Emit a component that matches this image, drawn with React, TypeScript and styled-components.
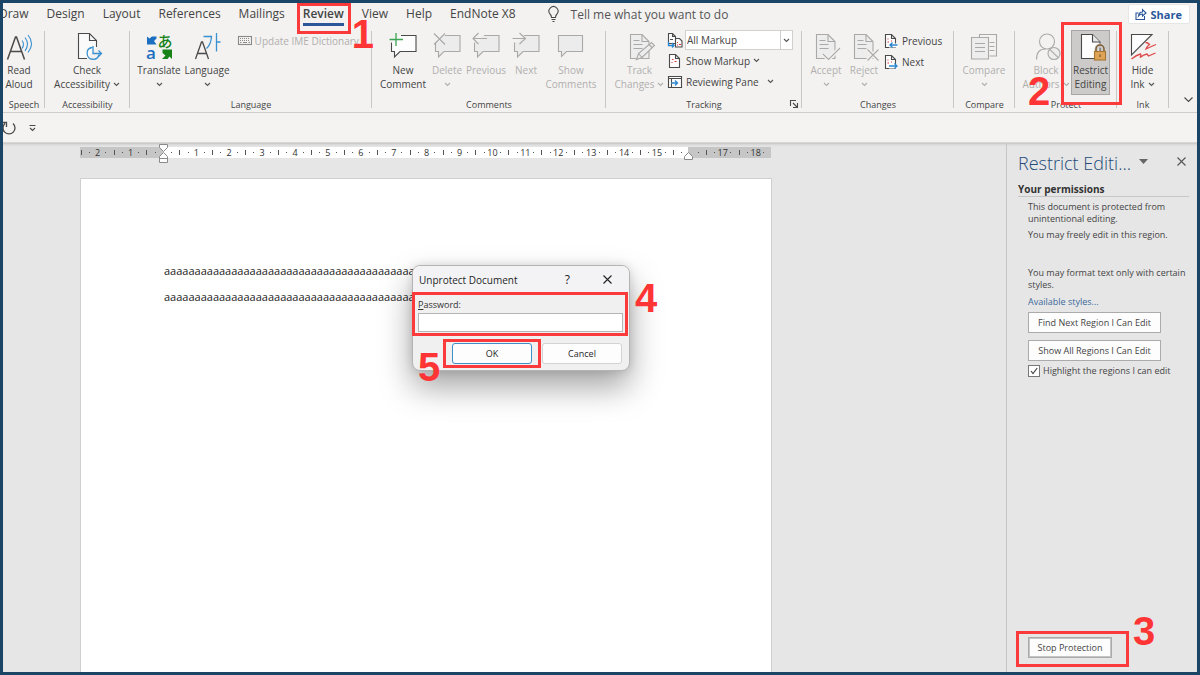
import React from "react";
import styled, { createGlobalStyle, css } from "styled-components";

const GlobalStyle = createGlobalStyle`
  *, *::before, *::after { box-sizing: border-box; }
  body { margin: 0; }
  body, button, input, select {
    font-family: "Open Sans", "Noto Sans", sans-serif;
    color: #444;
  }
  button { border: 0; background: none; padding: 0; }
  p, h2, h3 { margin: 0; font-weight: 400; }
  svg { display: block; flex: none; overflow: visible; }
`;

const Frame = styled.div`
  min-height: 100vh;
  display: flex;
  flex-direction: column;
  border: 3px solid #1b4566;
  background: #f3f2f1;
  overflow: hidden;
`;

/* ---------- annotations ---------- */

const Mark = styled.span<{ $inset: string }>`
  position: absolute;
  inset: ${(p) => p.$inset};
  border: 3px solid #fb3a3c;
  pointer-events: none;
  z-index: 3;
`;

const Step = styled.span<{ $x: number; $y: number }>`
  position: absolute;
  left: ${(p) => p.$x}px;
  top: ${(p) => p.$y}px;
  font: bold 40px/40px "Liberation Sans", sans-serif;
  color: #ff3535;
  pointer-events: none;
  z-index: 4;
`;

/* ---------- tab strip ---------- */

const TabBar = styled.nav`
  display: flex;
  align-items: flex-start;
  height: 25px;
  padding-right: 7px;
`;

const TabList = styled.div`
  display: flex;
  gap: 18px;
  margin-left: -4px;
  flex: 1;
  align-items: center;
`;

const Tab = styled.button<{ $active?: boolean }>`
  position: relative;
  flex: none;
  font-size: 12px;
  line-height: 22px;
  white-space: nowrap;
  ${(p) =>
    p.$active &&
    css`
      font-weight: 600;
      &::after {
        content: "";
        position: absolute;
        left: 0;
        right: 0;
        bottom: -1px;
        height: 3px;
        background: #2b579a;
      }
    `}
`;

const TellMe = styled.button`
  display: flex;
  align-items: center;
  gap: 12px;
  margin-left: 14px;
  font-size: 12px;
  color: #555;
  white-space: nowrap;
`;

const ShareButton = styled.button`
  display: flex;
  align-items: center;
  gap: 4px;
  height: 20px;
  margin-top: 1px;
  padding: 0 7px 0 6px;
  border-radius: 2px;
  background: #fff;
  border: 1px solid #e6e6e6;
  font-size: 11px;
  font-weight: 700;
  color: #2b579a;
`;

/* ---------- ribbon ---------- */

const Ribbon = styled.div`
  display: flex;
  height: 85px;
  padding-bottom: 1px;
  border-bottom: 1px solid #cfcdcb;
`;

const Group = styled.section<{ $w: number }>`
  position: relative;
  flex: 0 0 ${(p) => p.$w}px;
  display: flex;
  flex-direction: column;
  margin-top: 2px;
  &::after {
    content: "";
    position: absolute;
    right: 0;
    top: 1px;
    bottom: 3px;
    width: 1px;
    background: #c9c7c5;
  }
`;

const GroupBody = styled.div<{ $pad?: number }>`
  display: flex;
  align-items: flex-start;
  flex: 1;
  padding-left: ${(p) => p.$pad ?? 0}px;
`;

const GroupLabel = styled.h3`
  font-size: 9px;
  line-height: 12px;
  text-align: center;
  white-space: nowrap;
`;

const BigButton = styled.button<{ $w: number; $pressed?: boolean }>`
  position: relative;
  flex: none;
  width: ${(p) => p.$w}px;
  height: 65px;
  padding-top: 1px;
  display: flex;
  flex-direction: column;
  align-items: center;
  font-size: 10px;
  line-height: 14px;
  white-space: nowrap;
  &:disabled { color: #b1afad; }
  ${(p) =>
    p.$pressed &&
    css`
      background: #cdcbc9;
      box-shadow: inset 0 0 0 1px #a9a7a5;
    `}
`;

const LabelLine = styled.span`
  display: flex;
  align-items: center;
  justify-content: center;
  gap: 3px;
  min-height: 14px;
`;

const SmallStack = styled.div`
  display: flex;
  flex-direction: column;
  align-items: flex-start;
`;

const SmallButton = styled.button`
  display: flex;
  align-items: center;
  gap: 3px;
  height: 21px;
  font-size: 10px;
  white-space: nowrap;
  &:disabled { color: #b1afad; }
`;

const MarkupField = styled.div`
  display: flex;
  align-items: center;
  gap: 2px;
  height: 20px;
`;

const MarkupBox = styled.div`
  position: relative;
  width: 108px;
  height: 20px;
  svg {
    position: absolute;
    right: 3px;
    top: 8px;
  }
`;

const MarkupSelect = styled.select`
  appearance: none;
  display: block;
  width: 100%;
  height: 100%;
  padding: 0 12px 0 1px;
  border: 1px solid #d2d0ce;
  border-radius: 0;
  font-size: 10px;
  background: linear-gradient(#d2d0ce, #d2d0ce) right 11px top / 1px 100% no-repeat #fff;
`;

const Launcher = styled.button`
  position: absolute;
  right: 4px;
  bottom: 3px;
`;

const Collapse = styled.button`
  align-self: flex-end;
  margin-left: auto;
  padding: 0 4px 8px;
`;

const QuickAccess = styled.div`
  display: flex;
  align-items: center;
  gap: 12px;
  height: 30px;
  border-bottom: 1px solid #d8d6d4;
  background: #f4f3f2;
`;

/* ---------- document ---------- */

const Workspace = styled.main`
  flex: 1;
  display: flex;
  background: #e6e6e6;
  box-shadow: inset 0 3px 3px -2px #bdbdbd;
`;

const Canvas = styled.div`
  position: relative;
  flex: 1;
  min-width: 0;
  display: flex;
  flex-direction: column;
  padding: 4px 20px 0 77px;
`;

const Ruler = styled.div`
  position: relative;
  max-width: 691px;
  height: 11px;
  background: linear-gradient(90deg, #c6c6c6 12%, #fff 12%, #fff 88%, #c6c6c6 88%);
`;

const RulerScale = styled.div`
  display: grid;
  grid-template-columns: repeat(84, minmax(0, 1fr));
  margin: 0 3px 0 -3px;
  height: 11px;
  font-size: 9px;
  line-height: 11px;
  color: #333;
`;

const RulerCell = styled.span`
  display: flex;
  align-items: center;
  justify-content: center;
  white-space: nowrap;
`;

const Tick = styled.i<{ $tall?: boolean }>`
  width: 1px;
  height: ${(p) => (p.$tall ? 5 : 1)}px;
  flex: none;
  background: #555;
`;

const IndentMarker = styled.svg<{ $at: string }>`
  position: absolute;
  left: ${(p) => p.$at};
  top: -3px;
  margin-left: -4px;
`;

const Page = styled.article`
  flex: 1;
  max-width: 692px;
  margin-top: 20px;
  padding: 79px 83px 0;
  border: 1px solid #cfcfcf;
  border-bottom: 0;
  background: #fff;
  font-size: 11px;
  line-height: 26px;
  color: #1c1c1c;
  overflow: hidden;
`;

/* ---------- dialog ---------- */

const Dialog = styled.form`
  position: absolute;
  left: 409px;
  top: 122px;
  width: 218px;
  height: 106px;
  border-radius: 8px;
  border: 1px solid #b4b4b4;
  background: #f0f0f0;
  box-shadow: 0 16px 32px rgba(0, 0, 0, 0.36), 0 0 10px rgba(0, 0, 0, 0.12);
  padding: 0 6px 0 5px;
  color: #1f1f1f;
`;

const DialogTitle = styled.header`
  display: flex;
  align-items: center;
  height: 27px;
  margin: 0 -6px 0 -5px;
  padding: 0 17px 0 6px;
  border-radius: 7px 7px 0 0;
  background: #f3f3f6;
  h2 { font-size: 10px; flex: 1; white-space: nowrap; }
  button { font-size: 12px; color: #222; }
`;

const TitleButtons = styled.div`
  display: flex;
  align-items: center;
  gap: 33px;
`;

const Field = styled.div`
  position: relative;
  padding-top: 4px;
  label { display: block; font-size: 9px; line-height: 16px; color: #333; }
  input {
    display: block;
    width: 100%;
    height: 19px;
    border: 1px solid #b5b5b5;
    background: #fff;
    padding: 0 3px;
    font-size: 10px;
  }
`;

const DialogActions = styled.div`
  position: relative;
  display: flex;
  justify-content: flex-end;
  gap: 10px;
  padding: 11px 1px 0 0;
`;

const DialogButton = styled.button<{ $primary?: boolean }>`
  width: 80px;
  height: 21px;
  border: 1px solid ${(p) => (p.$primary ? "#3f8fc9" : "#d3d3d3")};
  border-radius: 3px;
  background: #fdfdfd;
  font-size: 9px;
  color: #1f1f1f;
`;

/* ---------- task pane ---------- */

const Pane = styled.aside`
  flex: 0 0 191px;
  display: flex;
  flex-direction: column;
  align-items: flex-start;
  padding: 8px 8px 14px 11px;
  border-left: 1px solid #c6c6c6;
  font-size: 9px;
  line-height: 12px;
`;

const PaneHeader = styled.header`
  display: flex;
  align-items: center;
  align-self: stretch;
  height: 24px;
  padding-right: 3px;
  h2 {
    font-size: 18px;
    line-height: 24px;
    font-weight: 300;
    color: #234a78;
    white-space: nowrap;
  }
  button:nth-of-type(1) { margin: -3px 0 0 8px; }
  button:nth-of-type(2) { margin: -3px 0 0 auto; }
`;

const PaneSection = styled.h3`
  align-self: stretch;
  margin-top: 7px;
  border-bottom: 1px solid #c6c6c6;
  font-size: 10px;
  line-height: 14px;
  font-weight: 700;
  color: #333;
`;

const PaneText = styled.p<{ $top: number }>`
  margin: ${(p) => p.$top}px 0 0 10px;
  white-space: nowrap;
`;

const PaneLink = styled.a`
  margin: 5px 0 4px 10px;
  color: #3c6a9c;
  text-decoration: none;
`;

const PaneButton = styled.button<{ $w: number }>`
  width: ${(p) => p.$w}px;
  height: 21px;
  margin: 0 0 7px 10px;
  border: 1px solid #ababab;
  background: #fdfdfd;
  font-size: 9px;
  white-space: nowrap;
`;

const CheckRow = styled.label`
  display: flex;
  align-items: center;
  gap: 3px;
  margin: -3px 0 0 10px;
  white-space: nowrap;
  input {
    appearance: none;
    width: 12px;
    height: 12px;
    margin: 0;
    border: 1px solid #777;
    background: #fff
      url("data:image/svg+xml,%3Csvg xmlns='http://www.w3.org/2000/svg' viewBox='0 0 10 10'%3E%3Cpath d='M2 5l2 2.6L8.2 2' fill='none' stroke='%23444' stroke-width='1.2'/%3E%3C/svg%3E");
  }
`;

const PaneFooter = styled.div`
  position: relative;
  margin-top: auto;
  button { margin-bottom: 0; box-shadow: inset 0 0 0 1px #c4c4c4; display: block; }
`;

/* ---------- icons ---------- */

type IconProps = { size?: [number, number]; children: React.ReactNode; stroke?: string };

const Icon = ({ size = [32, 32], children, stroke = "#4a4a4a" }: IconProps) => (
  <svg
    width={size[0]}
    height={size[1]}
    viewBox={`0 0 ${size[0]} ${size[1]}`}
    fill="none"
    stroke={stroke}
    strokeWidth="1.1"
    aria-hidden="true"
  >
    {children}
  </svg>
);

const Chevron = ({ muted }: { muted?: boolean }) => (
  <Icon size={[7, 5]} stroke={muted ? "#b1afad" : "#555"}>
    <path d="M1 1l2.500 2.500L6 1" />
  </Icon>
);

const Close = ({ size = 9, color = "#222" }: { size?: number; color?: string }) => (
  <Icon size={[size, size]} stroke={color}>
    <path d={`M.5 .5L${size - 0.5} ${size - 0.5}M${size - 0.5} .5L.5 ${size - 0.5}`} />
  </Icon>
);

const ReadAloudIcon = () => (
  <Icon>
    <path d="M4.500 28.500L12.500 6h1L21.500 28.500M7.500 20.500h11" strokeWidth="1.500" />
    <g stroke="#3b91d0">
      <path d="M19 9.500q3 3.500 0 8" />
      <path d="M22 6.500q5 6.500 0 13.500" />
      <path d="M25 4q7 8.500 0 17.500" />
    </g>
  </Icon>
);

const AccessibilityIcon = () => (
  <Icon>
    <path d="M16 27.500H7.500V2.500h11l7 7V16" fill="#fafafa" />
    <path d="M18.500 2.500v7h7" />
    <g stroke="#3b91d0" strokeWidth="1.300">
      <path d="M20.500 16.500a6 6 0 1 0 7.500 7" />
      <path d="M22 15v7.500h8M27.500 19.500l3 3-3 3M19 17.500l3-2" />
    </g>
  </Icon>
);

const TranslateIcon = () => (
  <svg width="32" height="32" viewBox="0 0 32 32" aria-hidden="true">
    <path d="M4 5.500l2.500 2L9 5.500h4.500v2L11 10l2.500 3.500H4z" fill="#1c6fc0" />
    <path d="M29 18.500v9.500l-2.500-2.500-2 2.500H19l3.500-3.500-3-2.500v-3.500z" fill="#178217" />
    <text x="3" y="28" fontSize="17" fontWeight="600" fill="#1c6fc0" fontFamily="Open Sans, sans-serif">a</text>
    <text x="14.500" y="15.500" fontSize="15" fontWeight="500" fill="#178217" fontFamily="Noto Sans CJK JP, sans-serif">あ</text>
  </svg>
);

const LanguageIcon = () => (
  <Icon>
    <path d="M4.500 28L10.500 11h1l6 17M6.500 22.500h9" strokeWidth="1.300" />
    <path d="M12.500 5.500h8q-.5 8-5 12M25.500 2v18.500M25.500 11h4" stroke="#3b91d0" strokeWidth="1.300" />
  </Icon>
);

const KeyboardIcon = () => (
  <Icon size={[14, 14]} stroke="#8a8a8a">
    <rect x=".5" y="2.500" width="13" height="8" />
    <path d="M2 4.500h10M2 6.500h10" strokeDasharray="1 1" />
    <path d="M2 8.500h1.500M5 8.500h4M10.500 8.500H12" />
  </Icon>
);

const CommentIcon = ({ kind, muted }: { kind: "new" | "delete" | "prev" | "next" | "show"; muted?: boolean }) => {
  const line = muted ? "#aaa9a8" : "#4a4a4a";
  const fill = muted ? "#ececec" : "#fdfdfd";
  return (
    <Icon stroke={line}>
      {kind === "show" ? (
        <path d="M3.500 4.500h24v16H11.500l-5 5v-5h-3z" fill={fill} />
      ) : (
        <>
          <path d="M4.500 11V20.500h3v5l5-5h16.500v-16H12L9 11z" fill={fill} stroke="none" />
          <path d="M4.500 11.500v9h3v5.500l5.500-5.500h16v-16H14" />
        </>
      )}
      {kind === "new" && <path d="M9 2v13M2.500 8.500h13.500" stroke="#3da455" strokeWidth="1.300" />}
      {kind === "delete" && <path d="M3 2.500l11 11M14 2.500l-11 11" />}
      {kind === "prev" && <path d="M3 7.500h14M8.500 2l-5.500 5.500 5.500 5.500" />}
      {kind === "next" && <path d="M2.500 7.500h13M9.500 2l6 5.500-6 5.500" />}
    </Icon>
  );
};

const MutedDoc = () => (
  <>
    <path d="M6.500 3.500h11.500l7 7v17h-18.500z" fill="#ededed" />
    <path d="M18 3.500v7h7M9.500 9.500h6M9.500 13.500h9M9.500 17.500h9" />
  </>
);

const TrackIcon = () => (
  <Icon stroke="#aaa9a8">
    <MutedDoc />
    <path d="M12.500 28.500l2-6L27.500 11.500l3 3L18 26.500z" fill="#ededed" />
    <path d="M14.500 22.500l3.500 4M25 13.500l3 3" />
  </Icon>
);

const AcceptIcon = () => (
  <Icon stroke="#aaa9a8">
    <MutedDoc />
    <path d="M13 23l5.500 5.500L30 17" stroke="#f3f2f1" strokeWidth="4" />
    <path d="M13 23l5.500 5.500L30 17" />
  </Icon>
);

const RejectIcon = () => (
  <Icon stroke="#aaa9a8">
    <MutedDoc />
    <path d="M19.500 18.500l11 11M30.500 18.500l-11 11" stroke="#f3f2f1" strokeWidth="4" />
    <path d="M19.500 18.500l11 11M30.500 18.500l-11 11" />
  </Icon>
);

const CompareIcon = () => (
  <Icon stroke="#aaa9a8">
    <path d="M11.500 6V3.500h17v21.500h-7M21.500 11.500h5M21.500 15.500h5M21.500 19.500h5" />
    <path d="M3.500 6.500h17v21.500h-17zM7 12.500h10M7 16.500h10M7 20.500h10" fill="#ededed" />
  </Icon>
);

const BlockAuthorsIcon = () => (
  <Icon stroke="#aaa9a8">
    <circle cx="17" cy="10.500" r="7.500" />
    <path d="M6.500 28.500q0-10.500 9-10.500" />
    <circle cx="24" cy="22.500" r="6" fill="#ededed" />
    <path d="M19.800 18.300l8.400 8.400" />
  </Icon>
);

const RestrictIcon = () => (
  <Icon>
    <path d="M6.500 3.500h11l7.500 7.500v16.500h-18.500z" fill="#fdfdfd" />
    <path d="M17.500 3.500V11H25" fill="#e6e6e6" />
    <path d="M21.500 21v-3a3.500 3.500 0 0 1 7 0v3" stroke="#cdcbc9" strokeWidth="4" />
    <path d="M21 21v-3a4 4 0 0 1 8 0v3" stroke="#7a5a30" strokeWidth="1.500" />
    <rect x="19.500" y="20.500" width="11" height="8.500" fill="#dda458" stroke="#a97531" />
    <path d="M25 23.500v2.500" stroke="#6b4a20" />
  </Icon>
);

const HideInkIcon = () => (
  <Icon>
    <path d="M4.500 3.500H25L4.500 24z" fill="#fdfdfd" />
    <g stroke="#dd4a4a" strokeWidth="1.300">
      <path d="M29 13.500q-6 2.500-10 4.500 1-3 3.500-4.500-1.500-2-4-2M4.500 28q5-4 9-5 1 1-.5 3.500 4-3 7-3.500l1.500 2 7-3" />
    </g>
  </Icon>
);

const SmallDoc = () => <path d="M2.500 1.500h6l4 4v9h-10zM8.500 1.500v4h4" fill="#fdfdfd" />;

const MarkupIcon = () => (
  <Icon size={[16, 16]}>
    <path d="M1.500 1.500h4l3 3v7h-7zM5.500 1.500v3h3" fill="#fdfdfd" />
    <path d="M8.500 6.500h4l2.500 2.500v6h-6.500zM3 7.500h3" fill="#fdfdfd" />
    <path d="M10 10.500h1M12 12.500h2M10 13h1" stroke="#d33" />
    <path d="M1.500 9.500v4h5M5 11l2 2.500-2 2" stroke="#2a86cf" strokeWidth="1.300" />
  </Icon>
);

const ShowMarkupIcon = () => (
  <Icon size={[16, 16]}>
    <SmallDoc />
    <path d="M5 6.500h1.500M4.500 9.500h1M7.500 8.500h2" stroke="#d33" />
  </Icon>
);

const ReviewingIcon = () => (
  <Icon size={[16, 16]}>
    <path d="M1.500 2.500h13v11h-13zM1.500 4.500h13M4.500 4.500v9" fill="#fdfdfd" />
    <path d="M4 9h6M8 6.500L10.500 9 8 11.500" stroke="#2a86cf" strokeWidth="1.300" />
  </Icon>
);

const ChangeIcon = ({ back }: { back?: boolean }) => (
  <Icon size={[16, 16]}>
    <SmallDoc />
    <path d="M4.500 6h1M4.500 9h1.500M8 8h1" stroke="#d33" />
    <path d="M6 12.500h9" stroke="#fdfdfd" strokeWidth="4" />
    <path
      d={back ? "M6.500 12h8M9.500 9.500L7 12l2.500 2.500" : "M6 12h8.500M11.500 9.500L14 12l-2.500 2.500"}
      stroke="#2a86cf"
      strokeWidth="1.300"
    />
  </Icon>
);

/* ---------- page ---------- */

const tabsBefore = ["Draw", "Design", "Layout", "References", "Mailings"];
const tabsAfter = ["Help", "EndNote X8"];

type BigProps = {
  w: number;
  icon: React.ReactNode;
  top: string;
  bottom?: string;
  arrow?: boolean;
  disabled?: boolean;
  pressed?: boolean;
  children?: React.ReactNode;
};

const Big = ({ w, icon, top, bottom, arrow, disabled, pressed, children }: BigProps) => (
  <BigButton $w={w} $pressed={pressed} aria-pressed={pressed} disabled={disabled}>
    {icon}
    <LabelLine>{top}</LabelLine>
    <LabelLine>
      {bottom}
      {arrow && <Chevron muted={disabled} />}
    </LabelLine>
    {children}
  </BigButton>
);

const rulerMarks = Array.from({ length: 84 }, (_, i) => {
  const quarter = i - 10;
  if (quarter === 0 || quarter === 64) return "";
  if (quarter % 4 === 0) return String(Math.abs(quarter / 4));
  return quarter % 2 === 0 ? "tick" : "dot";
});

const RulerMark = ({ mark }: { mark: string }) => {
  if (mark === "tick") return <Tick $tall />;
  if (mark === "dot") return <Tick />;
  return <>{mark}</>;
};

const bodyLine = "a".repeat(46);

export default function App() {
  return (
    <Frame>
      <GlobalStyle />
      <TabBar>
        <TabList>
          {tabsBefore.map((t) => (
            <Tab key={t}>{t}</Tab>
          ))}
          <Tab $active>
            Review
            <Mark $inset="0 -7px -9px -6px" />
            <Step $x={49} $y={11}>1</Step>
          </Tab>
          <Tab>View</Tab>
          {tabsAfter.map((t) => (
            <Tab key={t}>{t}</Tab>
          ))}
          <TellMe>
            <Icon size={[11, 16]}>
              <path d="M3.500 11.500q0-2-1.500-3.500a4.500 4.500 0 1 1 7 0q-1.500 1.500-1.500 3.500zM3.500 13.500h4M4.500 15.500h2" />
            </Icon>
            Tell me what you want to do
          </TellMe>
        </TabList>
        <ShareButton>
          <Icon size={[12, 12]} stroke="#2b579a">
            <path d="M3.500 5H1v6.500h8.500V8M3.500 8q.5-4 4-4V1.500L11 5 7.500 8V6q-2.500 0-4 2z" />
          </Icon>
          Share
        </ShareButton>
      </TabBar>

      <Ribbon>
        <Group $w={42}>
          <GroupBody>
            <Big w={32} icon={<ReadAloudIcon />} top="Read" bottom="Aloud" />
          </GroupBody>
          <GroupLabel>Speech</GroupLabel>
        </Group>
        <Group $w={85}>
          <GroupBody $pad={7}>
            <Big w={70} icon={<AccessibilityIcon />} top="Check" bottom="Accessibility" arrow />
          </GroupBody>
          <GroupLabel>Accessibility</GroupLabel>
        </Group>
        <Group $w={242}>
          <GroupBody $pad={6}>
            <Big w={46} icon={<TranslateIcon />} top="Translate" arrow />
            <Big w={50} icon={<LanguageIcon />} top="Language" arrow />
            <SmallButton disabled>
              &nbsp;
              <KeyboardIcon />
              Update IME Dictionary
            </SmallButton>
          </GroupBody>
          <GroupLabel>Language</GroupLabel>
        </Group>
        <Group $w={234}>
          <GroupBody $pad={6}>
            <Big w={50} icon={<CommentIcon kind="new" />} top="New" bottom="Comment" />
            <Big w={38} icon={<CommentIcon kind="delete" muted />} top="Delete" arrow disabled />
            <Big w={40} icon={<CommentIcon kind="prev" muted />} top="Previous" disabled />
            <Big w={40} icon={<CommentIcon kind="next" muted />} top="Next" disabled />
            <Big w={50} icon={<CommentIcon kind="show" muted />} top="Show" bottom="Comments" disabled />
          </GroupBody>
          <GroupLabel>Comments</GroupLabel>
        </Group>
        <Group $w={196}>
          <GroupBody $pad={6}>
            <Big w={55} icon={<TrackIcon />} top="Track" bottom="Changes" arrow disabled />
            <SmallStack>
              <MarkupField>
                <MarkupIcon />
                <MarkupBox>
                  <MarkupSelect aria-label="Display for review" defaultValue="All Markup">
                    <option>All Markup</option>
                  </MarkupSelect>
                  <Chevron />
                </MarkupBox>
              </MarkupField>
              <SmallButton>
                <ShowMarkupIcon />
                Show Markup
                <Chevron />
              </SmallButton>
              <SmallButton>
                <ReviewingIcon />
                Reviewing Pane&nbsp;&nbsp;
                <Chevron />
              </SmallButton>
            </SmallStack>
          </GroupBody>
          <GroupLabel>Tracking</GroupLabel>
          <Launcher aria-label="Tracking options">
            <Icon size={[8, 8]}>
              <path d="M.5 6V.5H6M3 3l4 4M7.500 3v4.500H3" />
            </Icon>
          </Launcher>
        </Group>
        <Group $w={152}>
          <GroupBody $pad={5}>
            <Big w={38} icon={<AcceptIcon />} top="Accept" arrow disabled />
            <Big w={38} icon={<RejectIcon />} top="Reject" arrow disabled />
            <SmallStack>
              <SmallButton>
                <ChangeIcon back />
                Previous
              </SmallButton>
              <SmallButton>
                <ChangeIcon />
                Next
              </SmallButton>
            </SmallStack>
          </GroupBody>
          <GroupLabel>Changes</GroupLabel>
        </Group>
        <Group $w={61}>
          <GroupBody $pad={6}>
            <Big w={48} icon={<CompareIcon />} top="Compare" arrow disabled />
          </GroupBody>
          <GroupLabel>Compare</GroupLabel>
        </Group>
        <Group $w={102}>
          <GroupBody $pad={6}>
            <Big w={50} icon={<BlockAuthorsIcon />} top="Block" bottom="Authors" arrow disabled />
            <Big w={39} icon={<RestrictIcon />} top="Restrict" bottom="Editing" pressed>
              <Mark $inset="-8px -12px -10px -10px" />
            </Big>
          </GroupBody>
          <GroupLabel>Protect</GroupLabel>
          <Step $x={13} $y={41}>2</Step>
        </Group>
        <Group $w={52}>
          <GroupBody $pad={5}>
            <Big w={41} icon={<HideInkIcon />} top="Hide" bottom="Ink" arrow />
          </GroupBody>
          <GroupLabel>Ink</GroupLabel>
        </Group>
        <Collapse aria-label="Collapse the ribbon">
          <Icon size={[9, 6]}>
            <path d="M.5 .5l4 4 4-4" />
          </Icon>
        </Collapse>
      </Ribbon>

      <QuickAccess>
        <button aria-label="Repeat">
          <Icon size={[14, 16]}>
            <path d="M2 3.500a6 6 0 1 0 8 0M-1 2.500h4.500V7" strokeWidth="1.300" />
          </Icon>
        </button>
        <button aria-label="Customize Quick Access Toolbar">
          <Icon size={[7, 8]}>
            <path d="M.5 1.500h6M1 4l2.500 2.500L6 4" />
          </Icon>
        </button>
      </QuickAccess>

      <Workspace>
        <Canvas>
          <Ruler>
            <RulerScale>
              {rulerMarks.map((m, i) => (
                <RulerCell key={i}>
                  <RulerMark mark={m} />
                </RulerCell>
              ))}
            </RulerScale>
            <IndentMarker $at="12%" width="9" height="20" fill="#fdfdfd" stroke="#8a8a8a">
              <path d="M.5 .5h8v3L4.500 7.500 .5 3.500zM4.500 8.500l4 4v6h-8v-6zM.5 14.500h8" />
            </IndentMarker>
            <IndentMarker $at="88%" width="9" height="20" fill="#fdfdfd" stroke="#8a8a8a">
              <path d="M4.500 8.500l4 4v3h-8v-3z" />
            </IndentMarker>
          </Ruler>
          <Page>
            <p>{bodyLine}</p>
            <p>{bodyLine}</p>
          </Page>

          <Dialog role="dialog" aria-label="Unprotect Document" onSubmit={(e) => e.preventDefault()}>
            <DialogTitle>
              <h2>Unprotect Document</h2>
              <TitleButtons>
                <button type="button">?</button>
                <button type="button" aria-label="Close">
                  <Close />
                </button>
              </TitleButtons>
            </DialogTitle>
            <Field>
              <label htmlFor="password">
                <u>P</u>assword:
              </label>
              <input id="password" type="password" />
              <Mark $inset="-1px -5px -4px -6px" />
              <Step $x={217} $y={-15}>4</Step>
            </Field>
            <DialogActions>
              <DialogButton $primary>OK</DialogButton>
              <DialogButton type="button">Cancel</DialogButton>
              <Mark $inset="7px 82px -4px 25px" />
              <Step $x={0} $y={15}>5</Step>
            </DialogActions>
          </Dialog>
        </Canvas>

        <Pane>
          <PaneHeader>
            <h2>Restrict Editi...</h2>
            <button aria-label="Task pane options">
              <Icon size={[9, 5]} stroke="none">
                <path d="M0 0h9L4.500 5z" fill="#666" />
              </Icon>
            </button>
            <button aria-label="Close pane">
              <Close color="#555" />
            </button>
          </PaneHeader>
          <PaneSection>Your permissions</PaneSection>
          <PaneText $top={4}>
            This document is protected from
            <br />
            unintentional editing.
          </PaneText>
          <PaneText $top={4}>You may freely edit in this region.</PaneText>
          <PaneText $top={26}>
            You may format text only with certain
            <br />
            styles.
          </PaneText>
          <PaneLink href="#styles">Available styles...</PaneLink>
          <PaneButton $w={133}>Find Next Region I Can Edit</PaneButton>
          <PaneButton $w={133}>Show All Regions I Can Edit</PaneButton>
          <CheckRow>
            <input type="checkbox" defaultChecked />
            Highlight the regions I can edit
          </CheckRow>
          <PaneFooter>
            <PaneButton $w={84}>Stop Protection</PaneButton>
            <Mark $inset="-6px -17px -9px -2px" />
            <Step $x={115} $y={-26}>3</Step>
          </PaneFooter>
        </Pane>
      </Workspace>
    </Frame>
  );
}
